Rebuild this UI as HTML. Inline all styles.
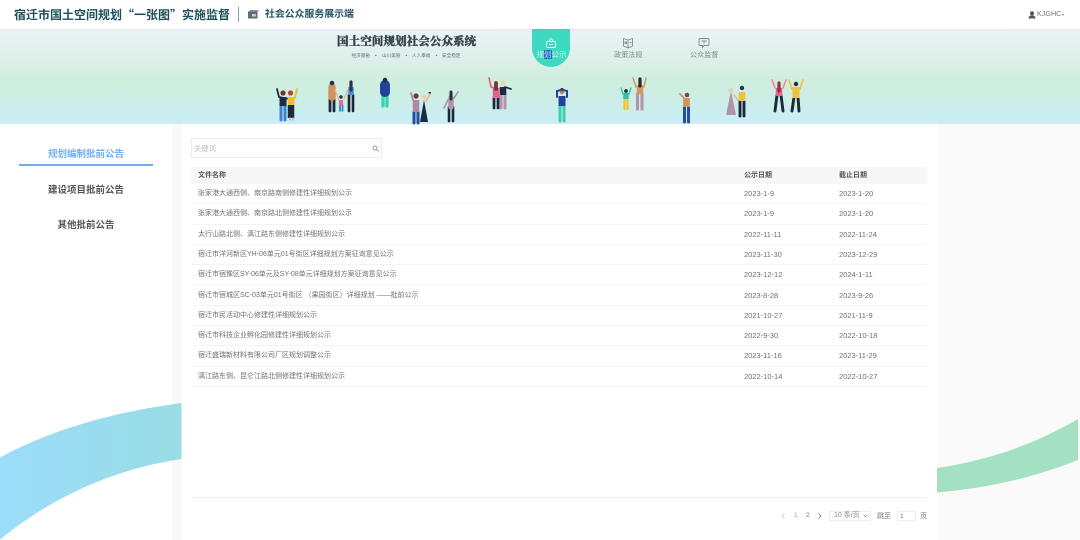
<!DOCTYPE html>
<html lang="zh">
<head>
<meta charset="utf-8">
<title>社会公众服务展示端</title>
<style>
*{margin:0;padding:0;box-sizing:border-box}
html,body{width:1080px;height:540px;overflow:hidden;background:#fff}
body{position:relative;font-family:"Liberation Sans","Noto Sans CJK SC",sans-serif}
.a{position:absolute;white-space:nowrap}
.t{filter:blur(.3px)}
#top{left:0;top:0;width:1080px;height:29px;background:#fff;box-shadow:0 1px 2px rgba(0,0,0,.035);z-index:3}
#banner{left:0;top:29px;width:1080px;height:95px;background:linear-gradient(180deg,#ebf3f9 0%,#dff0ec 28%,#cfeede 55%,#cbeee8 80%,#cbedf9 100%)}
.row{position:absolute;left:191px;width:736px;height:20.3px;border-bottom:1px solid #f3f3f3;font-size:7px;line-height:19px;color:#6f6f6f}
.row span{position:absolute;top:0;white-space:nowrap}
.row .c2,.row .c3{font-size:7.500px}
.c1{left:7px}.c2{left:553px}.c3{left:648px}
.side{left:0;width:172px;text-align:center;font-size:9.500px;font-weight:700;color:#555;line-height:14px}
.sub{top:52px;font-size:4.600px;line-height:7px;color:#667}
</style>
</head>
<body>
<!-- page columns -->
<div class="a" style="left:172px;top:124px;width:10px;height:416px;background:#f9f9f9"></div>
<div class="a" style="left:937px;top:124px;width:143px;height:416px;background:#fafafa"></div>

<!-- waves -->
<svg class="a" style="left:0;top:0" width="1080" height="540">
<defs>
<linearGradient id="b" x1="0" x2="1" y1="0" y2="0"><stop offset="0" stop-color="#9bdcf9"/><stop offset="1" stop-color="#9adde5"/></linearGradient>
</defs>
<path d="M0 457.500C55 428 115 412 181.500 403V459C115 469 55 495 0 539.500Z" fill="url(#b)"/>
<path d="M937 468C990 460 1035 444 1078 419V460C1035 477 990 488 937 492.500Z" fill="#a3e1c2"/>
</svg>

<!-- top bar -->
<div class="a" id="top">
  <div class="a t" style="left:14px;top:6px;font-family:'Noto Sans CJK SC',sans-serif;font-size:12px;line-height:17px;font-weight:700;color:#1c4f5b">宿迁市国土空间规划“一张图”实施监督</div>
  <div class="a" style="left:237.500px;top:7px;width:1px;height:15px;background:#8aa0a6"></div>
  <svg class="a" style="left:248px;top:10px" width="11" height="9"><rect x="0" y="1.500" width="9.500" height="7" fill="#5f6c75"/><rect x="1.500" y="0" width="9" height="1.500" fill="#8d979e"/><rect x="4" y="4" width="4" height="2.500" fill="#c7ced2"/></svg>
  <div class="a t" style="left:265px;top:7px;font-size:9.900px;line-height:15px;font-weight:700;color:#25535f">社会公众服务展示端</div>
  <svg class="a" style="left:1028px;top:11px" width="8" height="8"><circle cx="4" cy="2.300" r="2" fill="#555"/><path d="M.5 7.500C.8 5 2.500 4.300 4 4.300S7.200 5 7.500 7.500Z" fill="#555"/></svg>
  <div class="a t" style="left:1037px;top:9px;font-size:7.200px;line-height:10px;color:#777">KJGHC</div>
  <div class="a" style="left:1061.500px;top:13.500px;border:1.500px solid transparent;border-top:2px solid #888"></div>
</div>

<!-- banner -->
<div class="a" id="banner"></div>
<div class="a t" style="left:337px;top:33px;font-family:'Noto Serif CJK SC','Noto Sans CJK SC',serif;font-size:11.600px;line-height:16px;font-weight:900;color:#37454f;-webkit-text-stroke:.3px #37454f">国土空间规划社会公众系统</div>
<div class="a sub t" style="left:351.500px">经济富裕</div>
<div class="a sub t" style="left:375px">•</div>
<div class="a sub t" style="left:382px">山川美丽</div>
<div class="a sub t" style="left:405.500px">•</div>
<div class="a sub t" style="left:412px">人人幸福</div>
<div class="a sub t" style="left:435.500px">•</div>
<div class="a sub t" style="left:442px">安全稳定</div>

<div class="a" style="left:532px;top:29px;width:38px;height:38px;background:#3fd9c1;border-radius:0 0 19px 19px"></div>
<svg class="a" style="left:545px;top:37px" width="12" height="12" fill="none" stroke="#eafaf7" stroke-width=".9"><rect x="1.500" y="4.500" width="9" height="6" rx="1"/><path d="M3.500 4.500L6 1.500 8.500 4.500"/><path d="M4 7.500h4"/></svg>
<div class="a t" style="left:536.500px;top:50px;font-size:7.500px;line-height:10px;color:#c9f2ea">规<span style="background:#2b6cc4;color:#bcd6f5">划</span>公示</div>

<svg class="a" style="left:622px;top:37px" width="12" height="12" fill="none" stroke="#7f8b8b" stroke-width=".9"><path d="M1.500 1.500L6 3 10.500 1.500V9L6 11 1.500 9Z"/><path d="M6 3V11"/><rect x="3" y="5" width="1.500" height="1.500"/><path d="M7.500 5.500H9.500"/></svg>
<div class="a t" style="left:614px;top:50px;font-size:7.100px;line-height:10px;color:#7f8a8a">政策法规</div>
<svg class="a" style="left:698px;top:37px" width="12" height="12" fill="none" stroke="#7f8b8b" stroke-width=".9"><path d="M2 1.500H10A1 1 0 0 1 11 2.500V7.500A1 1 0 0 1 10 8.500H6L4.500 10.500V8.500H2A1 1 0 0 1 1 7.500V2.500A1 1 0 0 1 2 1.500Z"/><path d="M3.500 4H8.500M6 4V6.500"/></svg>
<div class="a t" style="left:690px;top:50px;font-size:7.100px;line-height:10px;color:#7f8a8a">公众监督</div>

<!-- people -->
<svg class="a" style="left:0;top:0;filter:blur(.25px)" width="1080" height="125" fill="none" stroke-linecap="round">
<!-- couple 1 -->
<path d="M277 89L279 97 289 99" stroke="#1d2b45" stroke-width="1.800"/>
<path d="M281 105V120M285 105V120" stroke="#3b86cf" stroke-width="3"/>
<path d="M283 97V106" stroke="#1d2b45" stroke-width="7" stroke-linecap="butt"/>
<circle cx="283" cy="93" r="2.600" fill="#7a2f2f"/>
<path d="M291 105V118" stroke="#1f2b3d" stroke-width="6.500" stroke-linecap="butt"/>
<path d="M291 97V105" stroke="#f2bd2f" stroke-width="6.500" stroke-linecap="butt"/>
<path d="M297 89L295 98 288 100" stroke="#f2bd2f" stroke-width="1.900"/>
<circle cx="290.500" cy="93" r="2.600" fill="#b14a2c"/>
<path d="M290 118V120M293 118V120" stroke="#c9a38f" stroke-width="1.400"/>
<!-- family -->
<path d="M330 96V111M334 96V111" stroke="#1d2838" stroke-width="2.800"/>
<path d="M332 87V97" stroke="#d0945f" stroke-width="7.500"/>
<circle cx="332" cy="83" r="2.300" fill="#273040"/>
<path d="M335 90L339 100" stroke="#e2b091" stroke-width="1.200"/>
<path d="M340 105V111M342.500 105V111" stroke="#3c84c9" stroke-width="1.800"/>
<path d="M341 100V105" stroke="#ec6d8a" stroke-width="4.200" stroke-linecap="butt"/>
<circle cx="341" cy="97" r="1.700" fill="#2a2f3b"/>
<path d="M349 95V111M353 95V111" stroke="#1d2838" stroke-width="2.600"/>
<path d="M351 87V95" stroke="#4a8fd0" stroke-width="5.500" stroke-linecap="butt"/>
<path d="M351 82V90" stroke="#27364a" stroke-width="3.200"/>
<path d="M348 90L344 99" stroke="#e2b091" stroke-width="1.200"/>
<!-- blue teal -->
<path d="M383 92V106M387 92V106" stroke="#3cd1b3" stroke-width="3.300"/>
<path d="M385 85V92" stroke="#20429c" stroke-width="10"/>
<circle cx="385" cy="80" r="2.300" fill="#20304a"/>
<!-- selfie -->
<path d="M414 112V123M418 112V123" stroke="#234f9e" stroke-width="3"/>
<path d="M416 100V112" stroke="#ac89a0" stroke-width="6.500" stroke-linecap="butt"/>
<path d="M411 93L413 100" stroke="#ac89a0" stroke-width="1.800"/>
<circle cx="416" cy="96" r="2.600" fill="#7a3330"/>
<path d="M424 100L428 122H420Z" fill="#1b2b45"/>
<circle cx="424" cy="97" r="2.300" fill="#eecdb2"/>
<path d="M426 101L430 94" stroke="#e2b091" stroke-width="1.400"/>
<rect x="428.500" y="92" width="2.500" height="1.500" fill="#333"/>
<!-- wave woman -->
<path d="M449 107V121M453 107V121" stroke="#1d2838" stroke-width="2.600"/>
<path d="M451 98V107" stroke="#b392ac" stroke-width="5.500"/>
<path d="M451 92V99" stroke="#27303f" stroke-width="3"/>
<path d="M454 98L458 92" stroke="#b392ac" stroke-width="1.700"/>
<path d="M448 100L444 108" stroke="#b392ac" stroke-width="1.700"/>
<!-- couple 2 -->
<path d="M494 97V108M498 97V108" stroke="#1d2838" stroke-width="2.700"/>
<path d="M496 88V98" stroke="#ea5d93" stroke-width="6.500" stroke-linecap="butt"/>
<path d="M489 78L491 87 498 89" stroke="#ea5d93" stroke-width="1.700"/>
<path d="M496 83V89" stroke="#7e3133" stroke-width="3.800"/>
<path d="M501 95V108M505 95V108" stroke="#b394aa" stroke-width="3"/>
<path d="M503 87V95" stroke="#1d2a40" stroke-width="6.500" stroke-linecap="butt"/>
<path d="M505 87L511 89" stroke="#1d2a40" stroke-width="1.700"/>
<circle cx="503" cy="83" r="2.300" fill="#ecd0b2"/>
<!-- blue teal 2 -->
<path d="M560 106V121M564 106V121" stroke="#3bd0b0" stroke-width="3"/>
<path d="M562 96V106" stroke="#20429c" stroke-width="7" stroke-linecap="butt"/>
<path d="M557 97V91L561 90M567 97V91L563 90" stroke="#20429c" stroke-width="2"/>
<circle cx="562" cy="92" r="2.200" fill="#b77b5f"/>
<circle cx="562" cy="89.500" r="1.600" fill="#3b3f4c"/>
<!-- child & woman -->
<path d="M624.500 99V109M627.500 99V109" stroke="#efc52f" stroke-width="2.300"/>
<path d="M626 93V99" stroke="#2bc4a9" stroke-width="5.500" stroke-linecap="butt"/>
<path d="M621 88L623 94M631 88L629 94" stroke="#2bc4a9" stroke-width="1.300"/>
<circle cx="626" cy="91" r="1.900" fill="#2a2f3b"/>
<path d="M637.500 94V109M642 94V109" stroke="#b394aa" stroke-width="3.100"/>
<path d="M640 85V94" stroke="#d9975f" stroke-width="6.500" stroke-linecap="butt"/>
<path d="M633 78L636 87M646 78L644 87" stroke="#d9975f" stroke-width="1.500"/>
<path d="M640 79V86" stroke="#222a38" stroke-width="3.200"/>
<!-- camera man -->
<path d="M684.500 107V122M688.500 107V122" stroke="#234f9e" stroke-width="3"/>
<path d="M686.500 98V107" stroke="#d0945f" stroke-width="6.500" stroke-linecap="butt"/>
<path d="M684 98L680 94" stroke="#d0945f" stroke-width="1.800"/>
<circle cx="687" cy="95" r="2.300" fill="#7e4a30"/>
<!-- old couple -->
<path d="M731 91L736 115H726Z" fill="#b394aa"/>
<circle cx="731" cy="90.500" r="2.300" fill="#f0c9ad"/>
<path d="M734 95L738 100" stroke="#e2b091" stroke-width="1.200"/>
<path d="M740 101V116M744 101V116" stroke="#1d2838" stroke-width="2.900"/>
<path d="M742 92V101" stroke="#f2c23a" stroke-width="6.500" stroke-linecap="butt"/>
<circle cx="742" cy="88" r="2.200" fill="#27303f"/>
<!-- pink & yellow -->
<path d="M777 95L775 111M781 95L783 111" stroke="#1d2838" stroke-width="2.900"/>
<path d="M779 88V96" stroke="#ea5d93" stroke-width="6.500" stroke-linecap="butt"/>
<path d="M772 80L775 88M786 80L783 88" stroke="#ea8aa0" stroke-width="1.600"/>
<path d="M779 83V91" stroke="#8a3634" stroke-width="3.200"/>
<path d="M794 97L792 111M798 97L799 111" stroke="#1d2838" stroke-width="2.900"/>
<path d="M796 87V98" stroke="#f2c23a" stroke-width="7" stroke-linecap="butt"/>
<path d="M789 80L792 89M803 80L800 89" stroke="#f2c23a" stroke-width="1.700"/>
<circle cx="796" cy="84" r="2.200" fill="#27303f"/>
</svg>

<!-- sidebar -->
<div class="a side t" style="top:147.500px;color:#6db0f6">规划编制批前公告</div>
<div class="a" style="left:19px;top:163.500px;width:134px;height:2px;background:#6eaef0"></div>
<div class="a side t" style="top:183.500px">建设项目批前公告</div>
<div class="a side t" style="top:218.500px">其他批前公告</div>

<!-- search -->
<div class="a" style="left:191px;top:138px;width:191px;height:20px;border:1px solid #ececec;border-radius:2px;background:#fff"></div>
<div class="a t" style="left:194px;top:143.500px;font-size:7.300px;line-height:10px;color:#bdbdbd">关键词</div>
<svg class="a" style="left:372px;top:145px" width="7" height="7" fill="none" stroke="#999" stroke-width=".9"><circle cx="3" cy="3" r="2"/><path d="M4.500 4.500L6.500 6.500"/></svg>

<!-- table -->
<div class="a" style="left:191px;top:167px;width:736px;height:17px;background:#f7f7f7"></div>
<div class="a t" style="left:198px;top:171px;font-size:7px;line-height:10px;font-weight:700;color:#555">文件名称</div>
<div class="a t" style="left:744px;top:171px;font-size:7px;line-height:10px;font-weight:700;color:#555">公示日期</div>
<div class="a t" style="left:839px;top:171px;font-size:7px;line-height:10px;font-weight:700;color:#555">截止日期</div>

<div class="t">
<div class="row" style="top:184px"><span class="c1">张家港大通西侧、南京路南侧修建性详细规划公示</span><span class="c2">2023-1-9</span><span class="c3">2023-1-20</span></div>
<div class="row" style="top:204.300px"><span class="c1">张家港大通西侧、南京路北侧修建性详细规划公示</span><span class="c2">2023-1-9</span><span class="c3">2023-1-20</span></div>
<div class="row" style="top:224.600px"><span class="c1">太行山路北侧、漓江路东侧修建性详细规划公示</span><span class="c2">2022-11-11</span><span class="c3">2022-11-24</span></div>
<div class="row" style="top:244.900px"><span class="c1">宿迁市洋河新区YH-06单元01号街区详细规划方案征询意见公示</span><span class="c2">2023-11-30</span><span class="c3">2023-12-29</span></div>
<div class="row" style="top:265.200px"><span class="c1">宿迁市宿豫区SY-06单元及SY-08单元详细规划方案征询意见公示</span><span class="c2">2023-12-12</span><span class="c3">2024-1-11</span></div>
<div class="row" style="top:285.500px"><span class="c1">宿迁市宿城区SC-03单元01号街区 （果园街区）详细规划 ——批前公示</span><span class="c2">2023-8-28</span><span class="c3">2023-9-26</span></div>
<div class="row" style="top:305.800px"><span class="c1">宿迁市民活动中心修建性详细规划公示</span><span class="c2">2021-10-27</span><span class="c3">2021-11-9</span></div>
<div class="row" style="top:326.100px"><span class="c1">宿迁市科技企业孵化园修建性详细规划公示</span><span class="c2">2022-9-30</span><span class="c3">2022-10-18</span></div>
<div class="row" style="top:346.400px"><span class="c1">宿迁盛瑞新材料有限公司厂区规划调整公示</span><span class="c2">2023-11-16</span><span class="c3">2023-11-29</span></div>
<div class="row" style="top:366.700px"><span class="c1">漓江路东侧、昆仑江路北侧修建性详细规划公示</span><span class="c2">2022-10-14</span><span class="c3">2022-10-27</span></div>
</div>

<!-- pagination -->
<div class="a" style="left:191px;top:496.500px;width:736px;height:1px;background:#f0f0f0"></div>
<svg class="a" style="left:781px;top:513px" width="5" height="6" fill="none" stroke="#c8c8c8" stroke-width=".8"><path d="M3.500 .5L1 3 3.500 5.500"/></svg>
<div class="a t" style="left:794px;top:511px;font-size:6.500px;line-height:10px;color:#6da9e8">1</div>
<div class="a t" style="left:806px;top:511px;font-size:6.500px;line-height:10px;color:#777">2</div>
<svg class="a" style="left:817px;top:513px" width="5" height="6" fill="none" stroke="#777" stroke-width=".8"><path d="M1.500 .5L4 3 1.500 5.500"/></svg>
<div class="a" style="left:829px;top:511px;width:42px;height:10px;border:1px solid #eee;border-radius:1px"></div>
<div class="a t" style="left:834px;top:510.500px;font-size:7px;line-height:10px;color:#888">10 条/页</div>
<svg class="a" style="left:863px;top:514px" width="5" height="4" fill="none" stroke="#888" stroke-width=".7"><path d="M.7 .7L2.500 2.700 4.300 .7"/></svg>
<div class="a t" style="left:877px;top:511.500px;font-size:7px;line-height:10px;color:#777">跳至</div>
<div class="a" style="left:896.500px;top:511px;width:19px;height:10px;border:1px solid #eee;border-radius:1px"></div>
<div class="a t" style="left:900px;top:511.500px;font-size:6.500px;line-height:10px;color:#777">1</div>
<div class="a t" style="left:920px;top:511.500px;font-size:7px;line-height:10px;color:#777">页</div>
</body>
</html>
